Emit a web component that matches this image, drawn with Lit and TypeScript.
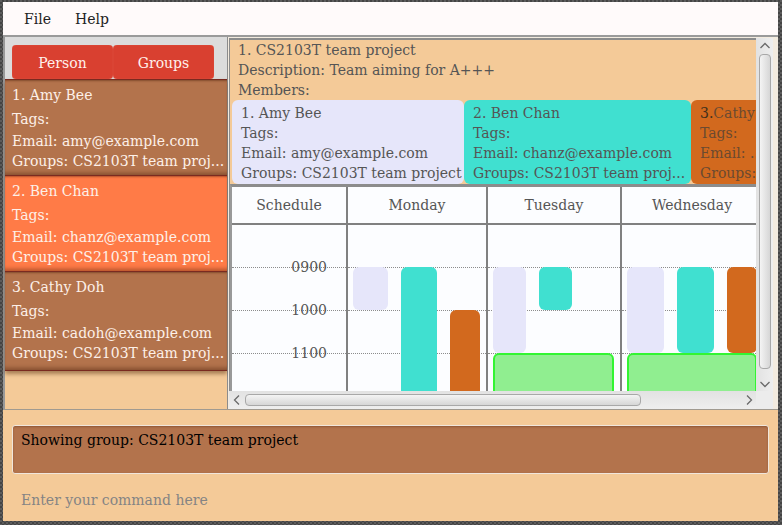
import { LitElement, html, css } from "lit";
import { customElement, property } from "lit/decorators.js";
import { styleMap } from "lit/directives/style-map.js";

interface Person {
  label: string;
  email: string;
  selected: boolean;
}

interface Member {
  kind: string;
  index: string;
  name: string;
  email: string;
  groups: string;
}

interface Block {
  kind: string;
  column: string;
  from: number;
  to: number;
}

interface Day {
  name: string;
  width: number;
  lanes: string;
  blocks: Block[];
}

const PEOPLE: Person[] = [
  { label: "1. Amy Bee", email: "amy@example.com", selected: false },
  { label: "2. Ben Chan", email: "chanz@example.com", selected: true },
  { label: "3. Cathy Doh", email: "cadoh@example.com", selected: false },
];

const MEMBERS: Member[] = [
  { kind: "amy", index: "1.", name: " Amy Bee", email: "amy@example.com", groups: "CS2103T team project" },
  { kind: "ben", index: "2.", name: " Ben Chan", email: "chanz@example.com", groups: "CS2103T team proj..." },
  { kind: "cathy", index: "3.", name: "Cathy", email: "...", groups: "" },
];

const HOURS = ["0900", "1000", "1100"];

const DAYS: Day[] = [
  {
    name: "Monday",
    width: 140,
    lanes: "35px 36px 30px",
    blocks: [
      { kind: "amy", column: "1", from: 1, to: 2 },
      { kind: "ben", column: "2", from: 1, to: 5 },
      { kind: "cathy", column: "3", from: 2, to: 5 },
    ],
  },
  {
    name: "Tuesday",
    width: 134,
    lanes: "33px 33px 29px",
    blocks: [
      { kind: "amy", column: "1", from: 1, to: 3 },
      { kind: "ben", column: "2", from: 1, to: 2 },
      { kind: "free", column: "1 / -1", from: 3, to: 5 },
    ],
  },
  {
    name: "Wednesday",
    width: 142,
    lanes: "37px 37px 30px",
    blocks: [
      { kind: "amy", column: "1", from: 1, to: 3 },
      { kind: "ben", column: "2", from: 1, to: 3 },
      { kind: "cathy", column: "3", from: 1, to: 3 },
      { kind: "free", column: "1 / -1", from: 3, to: 5 },
    ],
  },
];

const CHEVRONS: Record<string, string> = {
  up: "M1.5 8 L6 3.5 L10.5 8",
  down: "M1.5 4 L6 8.5 L10.5 4",
  left: "M8 1.5 L3.5 6 L8 10.5",
  right: "M4 1.5 L8.5 6 L4 10.5",
};

@customElement("scroll-track")
export class ScrollTrack extends LitElement {
  @property({ reflect: true }) direction = "vertical";
  @property({ type: Number }) extent = 100;

  static styles = css`
    :host {
      display: flex;
      flex-direction: column;
      background: linear-gradient(to right, #e2e2e2, #eeeeee);
    }
    :host([direction="horizontal"]) {
      flex-direction: row;
      background: linear-gradient(#e2e2e2, #eeeeee);
    }
    .arrow {
      flex: none;
      display: flex;
      align-items: center;
      justify-content: center;
      width: 17px;
      height: 15px;
      padding: 0;
      border: 0;
      background: none;
    }
    :host([direction="horizontal"]) .arrow {
      width: 15px;
      height: 18px;
    }
    .arrow svg {
      width: 12px;
      height: 12px;
      fill: none;
      stroke: #6a6a6a;
      stroke-width: 1.3;
    }
    .lane {
      flex: 1;
      min-width: 0;
      min-height: 0;
      padding: 1px 2px 1px 3px;
    }
    :host([direction="horizontal"]) .lane {
      padding: 3px 1px;
    }
    .thumb {
      box-sizing: border-box;
      width: 100%;
      height: 100%;
      border: 1px solid #a8a8a8;
      border-radius: 4px;
      background: linear-gradient(to right, #f4f4f4, #d6d6d6);
    }
    :host([direction="horizontal"]) .thumb {
      background: linear-gradient(#f4f4f4, #d6d6d6);
    }
  `;

  private arrow(name: string) {
    return html`<button class="arrow" aria-label="Scroll ${name}">
      <svg viewBox="0 0 12 12"><path d=${CHEVRONS[name]}></path></svg>
    </button>`;
  }

  render() {
    const vertical = this.direction === "vertical";
    const size = vertical ? { height: `${this.extent}%` } : { width: `${this.extent}%` };
    return html`
      ${this.arrow(vertical ? "up" : "left")}
      <div class="lane"><div class="thumb" style=${styleMap(size)}></div></div>
      ${this.arrow(vertical ? "down" : "right")}
    `;
  }
}

@customElement("week-schedule")
export class WeekSchedule extends LitElement {
  static styles = css`
    :host {
      display: block;
    }
    .table {
      table-layout: fixed;
      width: 534px;
      border-collapse: separate;
      border-spacing: 0;
      background: #fcfdff;
      border-left: 2px solid #999;
      border-top: 3px solid #8c8c8c;
    }
    .hours-col {
      width: 116px;
    }
    .head {
      height: 36px;
      padding: 0;
      font-weight: normal;
      text-align: center;
      border-right: 2px solid #808080;
      border-bottom: 2px solid #808080;
    }
    .cell {
      padding: 0;
      vertical-align: top;
      border-right: 2px solid #808080;
    }
    .lines {
      position: relative;
      height: 214px;
    }
    .rules {
      position: absolute;
      inset: 0;
    }
    .rule {
      box-sizing: border-box;
      height: 43px;
      border-bottom: 1px dotted #8c8c8c;
    }
    .labels {
      position: relative;
      display: flex;
      flex-direction: column;
      padding: 32px 19px 0 0;
      text-align: right;
    }
    .hour {
      height: 43px;
      line-height: 20px;
    }
    .lanes {
      position: relative;
      display: grid;
      grid-template-rows: 42px repeat(4, 43px);
      column-gap: 13px;
      padding-left: 5px;
    }
    .block {
      border-radius: 6px;
    }
    .amy {
      background: #e6e6fa;
    }
    .ben {
      background: #40e0d0;
    }
    .cathy {
      background: #d2691e;
    }
    .free {
      box-sizing: border-box;
      background: #90ee90;
      border: 2px solid #32f532;
    }
  `;

  private rules() {
    return html`<div class="rules">
      ${HOURS.map(() => html`<div class="rule"></div>`)}
    </div>`;
  }

  render() {
    return html`
      <table class="table">
        <colgroup>
          <col class="hours-col" />
          ${DAYS.map((d) => html`<col style=${styleMap({ width: `${d.width}px` })} />`)}
        </colgroup>
        <thead>
          <tr>
            <th class="head" scope="col">Schedule</th>
            ${DAYS.map((d) => html`<th class="head" scope="col">${d.name}</th>`)}
          </tr>
        </thead>
        <tbody>
          <tr>
            <td class="cell">
              <div class="lines">
                ${this.rules()}
                <div class="labels">
                  ${HOURS.map((h) => html`<span class="hour">${h}</span>`)}
                </div>
              </div>
            </td>
            ${DAYS.map(
              (d) => html`<td class="cell">
                <div class="lines">
                  ${this.rules()}
                  <div class="lanes" style=${styleMap({ gridTemplateColumns: d.lanes })}>
                    ${d.blocks.map(
                      (b) => html`<div
                        class="block ${b.kind}"
                        style=${styleMap({
                          gridColumn: b.column,
                          gridRow: `${b.from + 1} / ${b.to + 1}`,
                        })}
                      ></div>`
                    )}
                  </div>
                </div>
              </td>`
            )}
          </tr>
        </tbody>
      </table>
    `;
  }
}

@customElement("app-root")
export class AppRoot extends LitElement {
  static styles = css`
    :host {
      display: block;
      font: 14px/20px "DejaVu Serif", "Liberation Serif", serif;
      color: #555;
    }
    .window {
      box-sizing: border-box;
      display: flex;
      flex-direction: column;
      height: 100vh;
      padding: 2px 4px 4px 3px;
      background: repeating-conic-gradient(#444 0 25%, #5c5c5c 0 50%) 0 0 / 4px 4px;
    }
    .menu {
      flex: none;
      display: flex;
      gap: 24px;
      height: 33px;
      padding-left: 21px;
      background: #fffafa;
      border-bottom: 2px solid #9a9a9a;
    }
    button,
    input,
    textarea {
      font: inherit;
    }
    .menu-item {
      padding: 0;
      border: 0;
      background: none;
      color: #222;
    }
    .main {
      flex: 1;
      min-height: 0;
      display: flex;
      border-bottom: 1px solid #a09a90;
      background: #f4ca98;
    }
    .side {
      flex: none;
      box-sizing: border-box;
      width: 225px;
      border-left: 2px solid #999;
      border-right: 1px solid #8c8c8c;
    }
    .tabs {
      display: flex;
      height: 34px;
      padding: 8px 7px 0;
      background: #dcdcdc;
    }
    .tab {
      width: 101px;
      padding: 2px 0 0;
      border: 0;
      border-radius: 4px;
      background: #d94030;
      color: #fff0ec;
      box-shadow: inset 0 0 1px #e8705c;
    }
    .person {
      box-sizing: border-box;
      height: 96px;
      padding: 5px 0 0 7px;
      border-top: 1px solid #7a2a20;
      background: #b3734c;
      box-shadow:
        inset 0 2px 2px -1px rgba(60, 20, 0, 0.4),
        inset 0 -5px 4px -3px rgba(60, 20, 0, 0.4);
      color: #fdf0e8;
    }
    .person.selected {
      background: #ff7b47;
    }
    .person:last-child {
      height: 99px;
    }
    .list {
      border-bottom: 1px solid #7a2a20;
      box-shadow: 0 3px 4px rgba(90, 50, 20, 0.5);
    }
    .line {
      margin: 0;
      white-space: nowrap;
    }
    .person .line:nth-child(2) {
      margin: 4px 0 2px;
    }
    .detail {
      flex: 1;
      min-width: 0;
      display: grid;
      grid-template-columns: minmax(0, 1fr) 17px;
      grid-template-rows: minmax(0, 1fr) 18px;
      padding: 1px 5px 0 1px;
      background: #f3ebdf;
    }
    .viewport {
      overflow: hidden;
      border-top: 2px solid #8c8c8c;
      border-left: 1px solid #8c8c8c;
      background: #f4ca98;
    }
    .group {
      padding-left: 8px;
    }
    .members {
      display: flex;
      padding-left: 2px;
    }
    .member {
      flex: none;
      box-sizing: border-box;
      width: 227px;
      padding: 3px 0 1px 9px;
      border-radius: 6px;
    }
    .member.amy {
      width: 232px;
      background: #e6e6fa;
    }
    .member.ben {
      background: #40e0d0;
    }
    .member.cathy {
      background: #d2691e;
      color: #6b4a30;
    }
    .member.cathy .index {
      color: #40301c;
    }
    .corner {
      background: #ececec;
    }
    .footer {
      flex: none;
      display: flex;
      flex-direction: column;
      gap: 16px;
      padding: 15px 9px 11px;
      background: #f4ca98;
    }
    .result {
      display: block;
      box-sizing: border-box;
      width: 100%;
      height: 49px;
      padding: 4px 8px;
      resize: none;
      border: 1px solid #f0e6dc;
      border-radius: 3px;
      outline: none;
      background: #b3734c;
      box-shadow: inset 0 1px 2px #8f5836;
      color: #000;
    }
    .command {
      height: 20px;
      padding: 0 9px;
      border: 0;
      outline: none;
      background: none;
      color: #000;
    }
    .command::placeholder {
      color: #848484;
      opacity: 1;
    }
  `;

  render() {
    return html`
      <div class="window">
        <nav class="menu">
          <button class="menu-item">File</button>
          <button class="menu-item">Help</button>
        </nav>
        <main class="main">
          <aside class="side">
            <div class="tabs">
              <button class="tab">Person</button>
              <button class="tab">Groups</button>
            </div>
            <div class="list">
              ${PEOPLE.map(
                (p) => html`<article class="person ${p.selected ? "selected" : ""}">
                  <p class="line">${p.label}</p>
                  <p class="line">Tags:</p>
                  <p class="line">Email: ${p.email}</p>
                  <p class="line">Groups: CS2103T team proj...</p>
                </article>`
              )}
            </div>
          </aside>
          <section class="detail">
            <div class="viewport">
              <div class="group">
                <p class="line">1. CS2103T team project</p>
                <p class="line">Description: Team aiming for A+++</p>
                <p class="line">Members:</p>
              </div>
              <div class="members">
                ${MEMBERS.map(
                  (m) => html`<article class="member ${m.kind}">
                    <p class="line"><span class="index">${m.index}</span>${m.name}</p>
                    <p class="line">Tags:</p>
                    <p class="line">Email: ${m.email}</p>
                    <p class="line">Groups: ${m.groups}</p>
                  </article>`
                )}
              </div>
              <week-schedule></week-schedule>
            </div>
            <scroll-track direction="vertical" extent="98"></scroll-track>
            <scroll-track direction="horizontal" extent="80"></scroll-track>
            <div class="corner"></div>
          </section>
        </main>
        <footer class="footer">
          <textarea class="result" readonly aria-label="Result" .value=${"Showing group: CS2103T team project"}></textarea>
          <input class="command" type="text" aria-label="Command" placeholder="Enter your command here" />
        </footer>
      </div>
    `;
  }
}
